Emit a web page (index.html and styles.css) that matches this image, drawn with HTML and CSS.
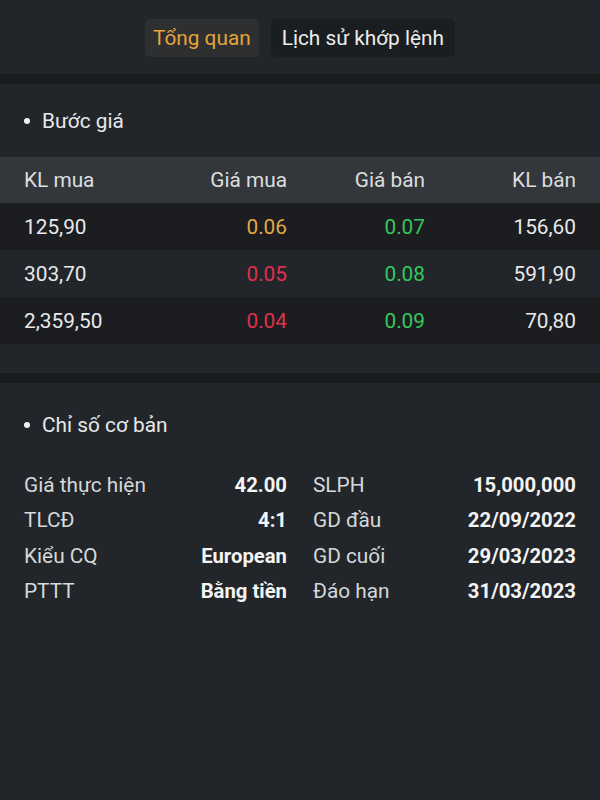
FILE: index.html
```html
<!DOCTYPE html>
<html lang="vi">
<head>
<meta charset="utf-8">
<link rel="stylesheet" href="styles.css">
</head>
<body>
<div class="page">
  <header class="tabs">
    <div class="tab active">Tổng quan</div>
    <div class="tab wide">Lịch sử khớp lệnh</div>
  </header>
  <div class="divider"></div>
  <section class="section">
    <div class="title"><span class="dot"></span>Bước giá</div>
    <div class="table">
      <div class="row head">
        <div class="c1">KL mua</div><div class="c2">Giá mua</div><div class="c3">Giá bán</div><div class="c4">KL bán</div>
      </div>
      <div class="row dark">
        <div class="c1">125,90</div><div class="c2 ref">0.06</div><div class="c3 up">0.07</div><div class="c4">156,60</div>
      </div>
      <div class="row">
        <div class="c1">303,70</div><div class="c2 down">0.05</div><div class="c3 up">0.08</div><div class="c4">591,90</div>
      </div>
      <div class="row dark">
        <div class="c1">2,359,50</div><div class="c2 down">0.04</div><div class="c3 up">0.09</div><div class="c4">70,80</div>
      </div>
    </div>
    <div class="spacer"></div>
  </section>
  <div class="divider"></div>
  <section class="section grow">
    <div class="title t2"><span class="dot"></span>Chỉ số cơ bản</div>
    <div class="stats">
      <div class="stat"><span class="lbl">Giá thực hiện</span><span class="val">42.00</span></div>
      <div class="stat"><span class="lbl">SLPH</span><span class="val">15,000,000</span></div>
      <div class="stat"><span class="lbl">TLCĐ</span><span class="val">4:1</span></div>
      <div class="stat"><span class="lbl">GD đầu</span><span class="val">22/09/2022</span></div>
      <div class="stat"><span class="lbl">Kiểu CQ</span><span class="val">European</span></div>
      <div class="stat"><span class="lbl">GD cuối</span><span class="val">29/03/2023</span></div>
      <div class="stat"><span class="lbl">PTTT</span><span class="val">Bằng tiền</span></div>
      <div class="stat"><span class="lbl">Đáo hạn</span><span class="val">31/03/2023</span></div>
    </div>
  </section>
</div>
</body>
</html>
```

FILE: styles.css
```css
* { box-sizing: border-box; }
html, body {
  margin: 0;
  padding: 0;
  background: #22262a;
}
body {
  font-family: Roboto, "Noto Sans", sans-serif;
  font-size: 20.8px;
  color: #e8e9ea;
}
.page {
  width: 600px;
  min-height: 800px;
  display: flex;
  flex-direction: column;
}
.tabs {
  height: 74px;
  display: flex;
  justify-content: center;
  align-items: flex-start;
  gap: 12px;
  padding-top: 19px;
}
.tab {
  height: 38px;
  line-height: 38px;
  padding: 0 8px;
  border-radius: 5px;
  background: #1b1e21;
  color: #eceded;
}
.tab.wide { padding: 0 11px; }
.tab.active {
  background: #2d2f31;
  color: #e4a43a;
}
.divider {
  height: 10px;
  background: #191c1f;
}
.section {
  background: #22262a;
}
.section.grow { flex: 1; }
.title {
  height: 73px;
  display: flex;
  align-items: center;
  padding-left: 24px;
  gap: 12px;
}
.title.t2 { height: 84px; }
.dot {
  width: 6px;
  height: 6px;
  border-radius: 50%;
  background: #f0f0f0;
}
.row {
  display: grid;
  grid-template-columns: 125px 138px 138px 151px;
  height: 47px;
  align-items: center;
  padding: 0 24px;
}
.row.head {
  height: 46px;
  background: #33373b;
  color: #dcdedf;
}
.row.dark { background: #1b1d20; }
.c2, .c3, .c4 { text-align: right; }
.ref { color: #e2aa44; }
.down { color: #e0304e; }
.up { color: #33c85e; }
.spacer { height: 29px; }
.stats {
  display: grid;
  grid-template-columns: 263px 263px;
  column-gap: 26px;
  padding: 0 24px;
}
.stat {
  height: 35.5px;
  display: flex;
  justify-content: space-between;
  align-items: center;
}
.lbl { color: #d6d8d9; }
.val { font-weight: 700; font-size: 20.3px; color: #f4f4f4; }
```
